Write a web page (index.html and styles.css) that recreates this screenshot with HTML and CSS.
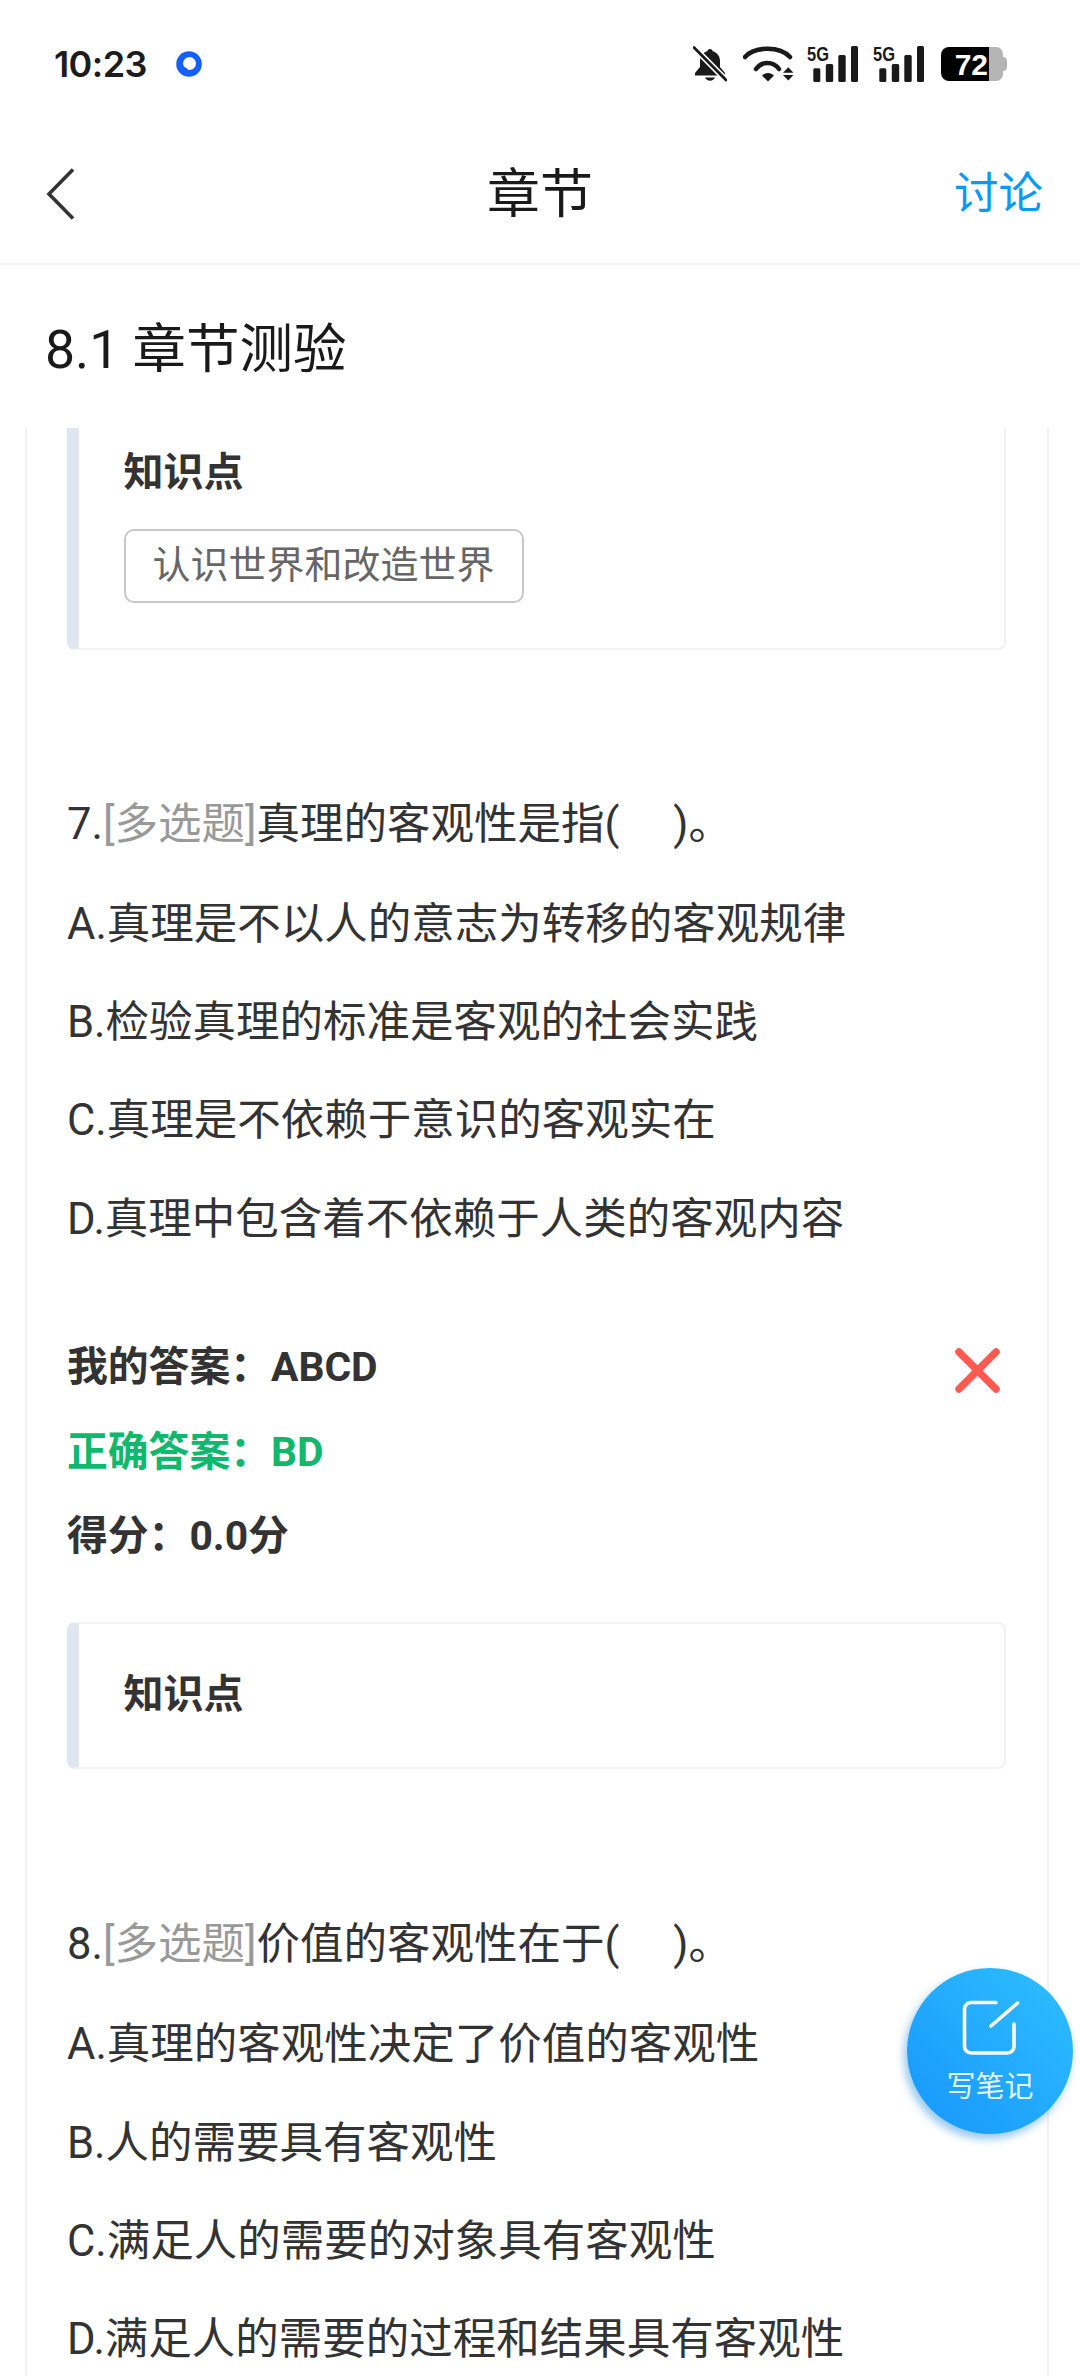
FILE: index.html
```html
<!DOCTYPE html>
<html lang="zh-CN">
<head>
<meta charset="utf-8">
<title>章节</title>
<link rel="stylesheet" href="styles.css">
</head>
<body>
<div class="phone">
  <div class="status">
    <div class="status-left">
      <span class="time">10:23</span>
      <svg class="app-dot" viewBox="0 0 26 26"><circle cx="13" cy="13" r="12.800" fill="#1560fa"/><circle cx="13.500" cy="12.500" r="6.500" fill="#fff"/><path d="M6 15.500c3 .2 5.500 1.500 6.500 4.500L8 21z" fill="#1560fa"/><path d="M19.800 13.500c-3-.6-5.800.6-6.600 3.500l-.8-2 3-3z" fill="#fff"/></svg>
    </div>
    <div class="status-right">
      <svg class="ic-bell" viewBox="0 0 34 36"><path d="M17 3c1.500 0 2.500 1 2.700 2.200C24.500 6.500 27 10.500 27 15v6l5 6v2.500H2V27l5-6v-6c0-4.500 2.500-8.500 7.300-9.800C14.500 4 15.500 3 17 3z" fill="#1a1a1a"/><path d="M12 31.500h10c-.7 2-2.700 3.200-5 3.200s-4.300-1.200-5-3.200z" fill="#1a1a1a"/><path d="M1 1.500 33 34" stroke="#fff" stroke-width="6"/><path d="M1 1.500 33 34" stroke="#1a1a1a" stroke-width="2.800" stroke-linecap="round"/></svg>
      <svg class="ic-wifi" viewBox="0 0 50.500 36"><g fill="none" stroke="#1a1a1a" stroke-width="4.500" stroke-linecap="round"><path d="M2 11C12 0 37 0 47 11"/><path d="M13 23c6-8 17-8 23 0"/></g><path d="M19 29.500c3-3.500 9-3.500 12 0l-6 6z" fill="#1a1a1a"/><path d="M40 26.700h10.500l-5.200-5.400zM40 29h10.500l-5.200 5.400z" fill="#1a1a1a"/></svg>
      <svg class="ic-sig" viewBox="0 -8 51 44"><text class="sig-t" x="0" y="14.700" textLength="22" lengthAdjust="spacingAndGlyphs">5G</text><rect x="6.300" y="22.300" width="7" height="13.700" rx="1.500"/><rect x="18.800" y="18" width="7.400" height="18" rx="1.500"/><rect x="31.300" y="9" width="7.400" height="27" rx="1.500"/><rect x="44" y="0" width="7" height="36" rx="1.500"/></svg>
      <svg class="ic-sig ic-sig-last" viewBox="0 -8 51 44"><text class="sig-t" x="0" y="14.700" textLength="22" lengthAdjust="spacingAndGlyphs">5G</text><rect x="6.300" y="22.300" width="7" height="13.700" rx="1.500"/><rect x="18.800" y="18" width="7.400" height="18" rx="1.500"/><rect x="31.300" y="9" width="7.400" height="27" rx="1.500"/><rect x="44" y="0" width="7" height="36" rx="1.500"/></svg>
      <div class="battery"><span class="bat-fill">72</span><span class="bat-rest"></span><span class="bat-tip"></span></div>
    </div>
  </div>

  <header class="nav">
    <svg class="back" viewBox="0 0 30 54"><path d="M27 2.500 3 27l24 24.500" fill="none" stroke="#333" stroke-width="3.600"/></svg>
    <h1 class="nav-title">章节</h1>
    <a class="nav-link">讨论</a>
  </header>

  <h2 class="page-title">8.1 章节测验</h2>

  <main class="scroll">
    <div class="card">
      <section class="kp kp-cut">
        <h3 class="kp-title">知识点</h3>
        <span class="kp-tag">认识世界和改造世界</span>
      </section>

      <section class="q q-first">
        <p class="line line-head"><span>7.</span><span class="type">[多选题]</span>真理的客观性是指(&nbsp;&nbsp;&nbsp;&nbsp;&nbsp;)。</p>
        <p class="line">A.真理是不以人的意志为转移的客观规律</p>
        <p class="line">B.检验真理的标准是客观的社会实践</p>
        <p class="line">C.真理是不依赖于意识的客观实在</p>
        <p class="line">D.真理中包含着不依赖于人类的客观内容</p>
      </section>

      <div class="answers">
        <p class="ans">我的答案：ABCD</p>
        <p class="ans ans-ok">正确答案：BD</p>
        <p class="ans">得分：0.0分</p>
        <svg class="wrong" viewBox="0 0 46 46"><path d="M4 4l38 38M42 4 4 42" stroke="#ff5a50" stroke-width="7.500" stroke-linecap="round" fill="none"/></svg>
      </div>

      <section class="kp kp-empty">
        <h3 class="kp-title">知识点</h3>
      </section>

      <section class="q q-next">
        <p class="line line-head"><span>8.</span><span class="type">[多选题]</span>价值的客观性在于(&nbsp;&nbsp;&nbsp;&nbsp;&nbsp;)。</p>
        <p class="line">A.真理的客观性决定了价值的客观性</p>
        <p class="line">B.人的需要具有客观性</p>
        <p class="line">C.满足人的需要的对象具有客观性</p>
        <p class="line">D.满足人的需要的过程和结果具有客观性</p>
      </section>
    </div>
  </main>

  <button class="fab">
    <svg class="fab-ic" viewBox="0 0 166 166"><g fill="none" stroke="#fff" stroke-width="3.600" stroke-linecap="round"><path d="M89 34.500H64a6.500 6.500 0 0 0-6.500 6.500v37.500a6.500 6.500 0 0 0 6.500 6.500h36.500a6.500 6.500 0 0 0 6.500-6.500V56"/><path d="M84 58 110.500 35"/></g></svg>
    <span class="fab-text">写笔记</span>
  </button>
</div>
</body>
</html>
```
FILE: styles.css
```css
* { box-sizing: border-box; margin: 0; padding: 0; }
html, body { background: #fff; }
body { font-family: Roboto, "Noto Sans CJK SC", sans-serif; color: #333; }
.phone { position: relative; width: 1080px; height: 2376px; overflow: hidden; background: #fff; display: flex; flex-direction: column; }

.status { height: 130px; flex: none; display: flex; justify-content: space-between; align-items: flex-start; padding: 45px 73px 0 54px; }
.status-left { display: flex; align-items: center; gap: 29px; height: 38px; }
.time { font-family: Inter, sans-serif; font-size: 36px; font-weight: 600; color: #1c1c1c; letter-spacing: -.6px; }
.app-dot { width: 26px; height: 26px; }
.status-right { display: flex; align-items: center; height: 38px; }
.ic-bell { width: 34px; height: 36px; margin-right: 16px; }
.ic-wifi { width: 50.5px; height: 36px; margin-right: 13.5px; }
.ic-sig { width: 51px; height: 44px; margin: -8px 15px 0 0; fill: #1a1a1a; }
.ic-sig-last { margin-right: 17px; }
.sig-t { font-family: "Liberation Sans", sans-serif; font-size: 20px; font-weight: 700; fill: #1a1a1a; }
.battery { display: flex; width: 66px; height: 34px; }
.bat-fill { width: 48px; height: 34px; padding-right: 1px; background: #000; color: #fff; border-radius: 8px 0 0 8px; font-family: "Liberation Sans", sans-serif; font-weight: 700; font-size: 30px; line-height: 35px; text-align: right; }
.bat-rest { width: 14px; height: 34px; background: #b5b5b5; border-radius: 0 7px 7px 0; }
.bat-tip { width: 4px; height: 14px; margin-top: 10px; background: #b5b5b5; border-radius: 0 4px 4px 0; }

.nav { height: 135px; flex: none; display: flex; align-items: center; justify-content: space-between; padding: 0 37px 6px 46px; border-bottom: 2px solid #f2f2f2; position: relative; }
.back { width: 30px; height: 54px; }
.nav-title { position: absolute; left: 0; right: 0; top: 35px; text-align: center; font-size: 53px; font-weight: 400; color: #1a1a1a; line-height: 60px; pointer-events: none; }
.nav-link { font-size: 44.5px; color: #0a9af5; line-height: 60px; }

.page-title { height: 163px; flex: none; padding-left: 45px; font-size: 53.5px; font-weight: 400; line-height: 170px; color: #1a1a1a; }

.scroll { flex: 1; min-height: 0; overflow: hidden; }
.card { margin: 0 31px 0 25px; padding: 0 41px 0 40px; border-left: 2px solid #f1f2f3; border-right: 2px solid #f1f2f3; }

.kp { border: 2px solid #f1f2f3; border-left: 12px solid #dfe6f0; border-radius: 8px; padding-left: 44.5px; }
.kp-cut { height: 222px; border-top: 0; border-radius: 0 0 8px 8px; padding-top: 20px; }
.kp-empty { height: 147px; margin-top: 43px; padding-top: 46px; }
.kp-title { font-size: 40px; font-weight: 700; line-height: 50px; color: #333; }
.kp-tag { display: inline-block; margin-top: 31px; height: 74px; padding: 0 27px; border: 2px solid #c8c8c8; border-radius: 10px; font-size: 38px; line-height: 68px; color: #666; }

.q-first { margin-top: 126px; }
.q-next { margin-top: 127.5px; }
.line { font-size: 43.5px; line-height: 98.3px; color: #333; white-space: nowrap; }
.line-head { margin-bottom: 1.5px; }
.type { color: #999; }

.answers { position: relative; margin-top: 56.5px; }
.ans { font-size: 40.8px; font-weight: 700; line-height: 84.5px; color: #333; }
.ans-ok { color: #10b86e; }
.wrong { position: absolute; top: 23px; right: 6px; width: 45px; height: 45px; }

.fab { position: absolute; left: 907px; top: 1968px; width: 166px; height: 166px; border: 0; border-radius: 50%; background: linear-gradient(45deg, #1596fb, #30bfff); box-shadow: -3px 5px 9px rgba(20, 130, 220, .45); color: #fff; font-family: inherit; }
.fab-ic { position: absolute; left: 0; top: 0; width: 166px; height: 166px; }
.fab-text { position: absolute; left: 0; right: 0; top: 101px; text-align: center; font-size: 29px; line-height: 36px; color: #e3f3ff; }
```
